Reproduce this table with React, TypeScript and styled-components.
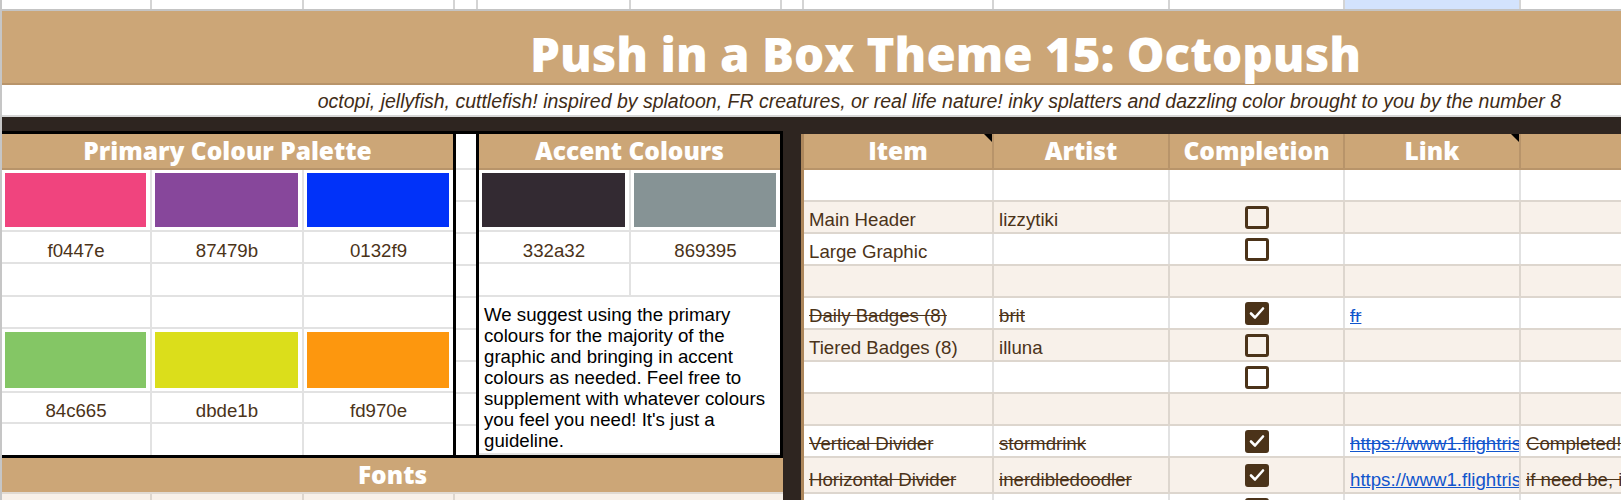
import React from 'react';
import styled, { createGlobalStyle } from 'styled-components';

const tan = '#cca677';
const tanEdge = '#b8946a';
const ink = '#4b3319';
const gridLine = '#e2e2e2';
const warmLine = '#ddd6ce';
const cream = '#f8f1ea';
const dark = '#2e2520';

const GlobalStyle = createGlobalStyle`
  html, body {
    margin: 0;
    padding: 0;
    background: #fff;
  }
  body {
    width: 1621px;
    height: 500px;
    overflow: hidden;
    font-family: 'Liberation Sans', Arial, sans-serif;
  }
`;

const Page = styled.div`
  width: 1619px;
  height: 500px;
  border-left: 2px solid #c6c6c6;
  display: flex;
  flex-direction: column;
  overflow: hidden;
`;

const TopStrip = styled.div`
  flex-shrink: 0;
  display: grid;
  grid-template-columns: 148px 150px 149px 21px 151px 149px 20px 188px 174px 173px 174px 1fr;
  column-gap: 2px;
  height: 9px;
  background: #d4d4d4;
  border-bottom: 2px solid #c4c4c4;
`;

const StripCell = styled.div<{ $selected?: boolean }>`
  background: ${({ $selected }) => ($selected ? '#d3e3fd' : '#fff')};
`;

const TitleBar = styled.div`
  flex-shrink: 0;
  height: 72px;
  background: ${tan};
  border-bottom: 2px solid ${tanEdge};
  display: flex;
  align-items: flex-end;
  justify-content: center;
  padding-left: 268px;
`;

const Title = styled.h1`
  margin: 0;
  padding-bottom: 5px;
  font-family: 'Open Sans', sans-serif;
  font-weight: 800;
  font-size: 47.5px;
  line-height: 48px;
  color: #fff;
  white-space: nowrap;
`;

const SubtitleBar = styled.div`
  flex-shrink: 0;
  height: 30px;
  border-bottom: 2px solid #d6d6d6;
  display: flex;
  align-items: flex-end;
  justify-content: flex-end;
  padding-right: 60px;
`;

const Subtitle = styled.p`
  margin: 0;
  padding-bottom: 3px;
  font-style: italic;
  font-size: 19.5px;
  line-height: 22px;
  color: #3f2c17;
  white-space: nowrap;
`;

const Body = styled.div`
  flex: 1;
  display: flex;
  background: ${dark};
  min-height: 0;
`;

const LeftColumn = styled.div`
  width: 781px;
  margin-top: 14px;
  display: flex;
  flex-direction: column;
  flex-shrink: 0;
`;

const Boxed = styled.div`
  display: flex;
  border-top: 3px solid #000;
  border-bottom: 3px solid #000;
`;

const Section = styled.div<{ $width: number }>`
  width: ${({ $width }) => $width}px;
  display: flex;
  flex-direction: column;
  border-right: 3px solid #000;
  background: ${gridLine};
`;

const SectionHeader = styled.div`
  height: 34px;
  background: ${tan};
  border-bottom: 2px solid ${tanEdge};
  display: flex;
  align-items: center;
  justify-content: center;
  font-family: 'Open Sans', sans-serif;
  font-weight: 800;
  font-size: 24.5px;
  line-height: 34px;
  color: #fff;
  white-space: nowrap;
`;

const PaletteGrid = styled.div<{ $cols: string; $rows: string }>`
  display: grid;
  grid-template-columns: ${({ $cols }) => $cols};
  grid-template-rows: ${({ $rows }) => $rows};
  gap: 2px;
  background: ${gridLine};
`;

const Cell = styled.div`
  background: #fff;
`;

const SwatchCell = styled.div`
  background: #fff;
  padding: 3px 4px 3px 3px;
  display: flex;
`;

const Swatch = styled.div<{ $color: string }>`
  flex: 1;
  background: ${({ $color }) => $color};
`;

const HexCell = styled.div`
  background: #fff;
  display: flex;
  align-items: flex-end;
  justify-content: center;
  font-size: 18.67px;
  color: ${ink};
`;

const Note = styled.div`
  grid-column: 1 / -1;
  background: #fff;
  padding: 7px 4px 0 5px;
  font-size: 18.67px;
  line-height: 21px;
  color: #000;
`;

const GapColumn = styled.div`
  width: 20px;
  border-right: 3px solid #000;
  background: #fff;
  display: flex;
  flex-direction: column;
`;

const GapHead = styled.div`
  height: 34px;
  border-bottom: 2px solid ${gridLine};
`;

const GapBody = styled.div`
  flex: 1;
  background: repeating-linear-gradient(to bottom, #fff 0 30px, ${gridLine} 30px 32px);
`;

const FontsHeader = styled(SectionHeader)`
  border-bottom: 2px solid #e0dad3;
`;

const FontsRow = styled.div`
  display: grid;
  grid-template-columns: 148px 150px 149px 1fr;
  gap: 2px;
  height: 30px;
  background: ${warmLine};
`;

const CreamCell = styled.div`
  background: ${cream};
`;

const Gutter = styled.div`
  width: 18px;
  flex-shrink: 0;
`;

const RightPanel = styled.div`
  flex: 1;
  margin-top: 17px;
  border-left: 3px solid #ad875c;
  display: flex;
  flex-direction: column;
  min-width: 0;
`;

const columns = '188px 174px 173px 174px 1fr';

const HeaderRow = styled.div`
  flex-shrink: 0;
  display: grid;
  grid-template-columns: ${columns};
  column-gap: 2px;
  height: 34px;
  background: ${tanEdge};
  border-bottom: 2px solid ${tanEdge};
`;

const HeadCell = styled.div<{ $note?: boolean }>`
  position: relative;
  background: ${tan};
  display: flex;
  align-items: center;
  justify-content: center;
  font-family: 'Open Sans', sans-serif;
  font-weight: 800;
  font-size: 24.5px;
  line-height: 34px;
  color: #fff;
  &::after {
    content: '';
    display: ${({ $note }) => ($note ? 'block' : 'none')};
    position: absolute;
    top: 0;
    right: 0;
    border-style: solid;
    border-width: 0 8px 8px 0;
    border-color: transparent #000 transparent transparent;
  }
`;

const Row = styled.div<{ $cream?: boolean; $h: number }>`
  flex-shrink: 0;
  display: grid;
  grid-template-columns: ${columns};
  column-gap: 2px;
  height: ${({ $h }) => $h}px;
  background: ${({ $cream }) => ($cream ? warmLine : gridLine)};
  border-bottom: 2px solid ${warmLine};
`;

const DataCell = styled.div<{ $cream?: boolean; $struck?: boolean }>`
  background: ${({ $cream }) => ($cream ? cream : '#fff')};
  display: flex;
  align-items: flex-end;
  padding: 0 4px 1px 5px;
  font-size: 18.67px;
  color: ${ink};
  white-space: nowrap;
  overflow: hidden;
  text-decoration: ${({ $struck }) => ($struck ? 'line-through' : 'none')};
`;

const CheckCell = styled.div<{ $cream?: boolean }>`
  background: ${({ $cream }) => ($cream ? cream : '#fff')};
  display: flex;
  align-items: center;
  justify-content: center;
`;

const Box = styled.div<{ $checked?: boolean }>`
  box-sizing: border-box;
  width: 24px;
  height: 23px;
  border: 3px solid ${ink};
  border-radius: 3px;
  background: ${({ $checked }) => ($checked ? ink : 'transparent')};
  display: flex;
  align-items: center;
  justify-content: center;
`;

const Link = styled.a<{ $struck?: boolean }>`
  color: #1155cc;
  text-decoration: ${({ $struck }) => ($struck ? 'underline line-through' : 'underline')};
`;

const Checkbox = ({ checked }: { checked?: boolean }) => (
  <Box $checked={checked}>
    {checked && (
      <svg width="16" height="14" viewBox="0 0 16 14">
        <path d="M2 7.5 L6 11.5 L14 2.5" fill="none" stroke="#fff" strokeWidth="2.6" strokeLinecap="round" strokeLinejoin="round" />
      </svg>
    )}
  </Box>
);

type Item = {
  item?: string;
  artist?: string;
  box?: 'on' | 'off';
  link?: string;
  linkStruck?: boolean;
  note?: string;
  struck?: boolean;
  h?: number;
};

const rows: Item[] = [
  {},
  { item: 'Main Header', artist: 'lizzytiki', box: 'off' },
  { item: 'Large Graphic', box: 'off' },
  {},
  { item: 'Daily Badges (8)', artist: 'brit', box: 'on', link: 'fr', linkStruck: true, struck: true },
  { item: 'Tiered Badges (8)', artist: 'illuna', box: 'off' },
  { box: 'off' },
  {},
  {
    item: 'Vertical Divider',
    artist: 'stormdrink',
    box: 'on',
    link: 'https://www1.flightrising.com/forums/skin/3187211',
    linkStruck: true,
    note: 'Completed! Thank you so much!',
    struck: true,
  },
  {
    item: 'Horizontal Divider',
    artist: 'inerdibledoodler',
    box: 'on',
    link: 'https://www1.flightrising.com/forums/skin/3187254',
    note: 'if need be, i can make more dividers',
    struck: true,
    h: 34,
  },
  { box: 'on' },
];

const topCells = Array.from({ length: 12 }, (_, i) => i);

const primary = [
  ['#f0447e', 'f0447e'],
  ['#87479b', '87479b'],
  ['#0132f9', '0132f9'],
];
const primary2 = [
  ['#84c665', '84c665'],
  ['#dbde1b', 'dbde1b'],
  ['#fd970e', 'fd970e'],
];
const accents = [
  ['#332a32', '332a32'],
  ['#869395', '869395'],
];

export default function App() {
  return (
    <>
      <GlobalStyle />
      <Page>
        <TopStrip>
          {topCells.map((i) => (
            <StripCell key={i} $selected={i === 10} />
          ))}
        </TopStrip>
        <TitleBar>
          <Title>Push in a Box Theme 15: Octopush</Title>
        </TitleBar>
        <SubtitleBar>
          <Subtitle>
            octopi, jellyfish, cuttlefish! inspired by splatoon, FR creatures, or real life nature! inky splatters and
            dazzling color brought to you by the number 8
          </Subtitle>
        </SubtitleBar>
        <Body>
          <LeftColumn>
            <Boxed>
              <Section $width={451}>
                <SectionHeader>Primary Colour Palette</SectionHeader>
                <PaletteGrid $cols="148px 150px 149px" $rows="60px 30px 31px 30px 62px 29px 31px">
                  {primary.map(([c]) => (
                    <SwatchCell key={c}>
                      <Swatch $color={c} />
                    </SwatchCell>
                  ))}
                  {primary.map(([, hex]) => (
                    <HexCell key={hex}>{hex}</HexCell>
                  ))}
                  {[0, 1, 2, 3, 4, 5].map((i) => (
                    <Cell key={i} />
                  ))}
                  {primary2.map(([c]) => (
                    <SwatchCell key={c}>
                      <Swatch $color={c} />
                    </SwatchCell>
                  ))}
                  {primary2.map(([, hex]) => (
                    <HexCell key={hex}>{hex}</HexCell>
                  ))}
                  {[0, 1, 2].map((i) => (
                    <Cell key={i} />
                  ))}
                </PaletteGrid>
              </Section>
              <GapColumn>
                <GapHead />
                <GapBody />
              </GapColumn>
              <Section $width={301}>
                <SectionHeader>Accent Colours</SectionHeader>
                <PaletteGrid $cols="150px 149px" $rows="60px 30px 31px 156px">
                  {accents.map(([c]) => (
                    <SwatchCell key={c}>
                      <Swatch $color={c} />
                    </SwatchCell>
                  ))}
                  {accents.map(([, hex]) => (
                    <HexCell key={hex}>{hex}</HexCell>
                  ))}
                  <Cell />
                  <Cell />
                  <Note>
                    We suggest using the primary colours for the majority of the graphic and bringing in accent colours
                    as needed. Feel free to supplement with whatever colours you feel you need! It's just a guideline.
                  </Note>
                </PaletteGrid>
              </Section>
            </Boxed>
            <FontsHeader>Fonts</FontsHeader>
            <FontsRow>
              <CreamCell />
              <CreamCell />
              <CreamCell />
              <CreamCell />
            </FontsRow>
          </LeftColumn>
          <Gutter />
          <RightPanel>
            <HeaderRow>
              <HeadCell $note>Item</HeadCell>
              <HeadCell>Artist</HeadCell>
              <HeadCell>Completion</HeadCell>
              <HeadCell $note>Link</HeadCell>
              <HeadCell />
            </HeaderRow>
            {rows.map((r, i) => {
              const shade = i % 2 === 1;
              return (
                <Row key={i} $cream={shade} $h={r.h ?? 30}>
                  <DataCell $cream={shade} $struck={r.struck}>
                    {r.item}
                  </DataCell>
                  <DataCell $cream={shade} $struck={r.struck}>
                    {r.artist}
                  </DataCell>
                  <CheckCell $cream={shade}>{r.box && <Checkbox checked={r.box === 'on'} />}</CheckCell>
                  <DataCell $cream={shade}>
                    {r.link && <Link $struck={r.linkStruck}>{r.link}</Link>}
                  </DataCell>
                  <DataCell $cream={shade} $struck={r.struck}>
                    {r.note}
                  </DataCell>
                </Row>
              );
            })}
          </RightPanel>
        </Body>
      </Page>
    </>
  );
}
